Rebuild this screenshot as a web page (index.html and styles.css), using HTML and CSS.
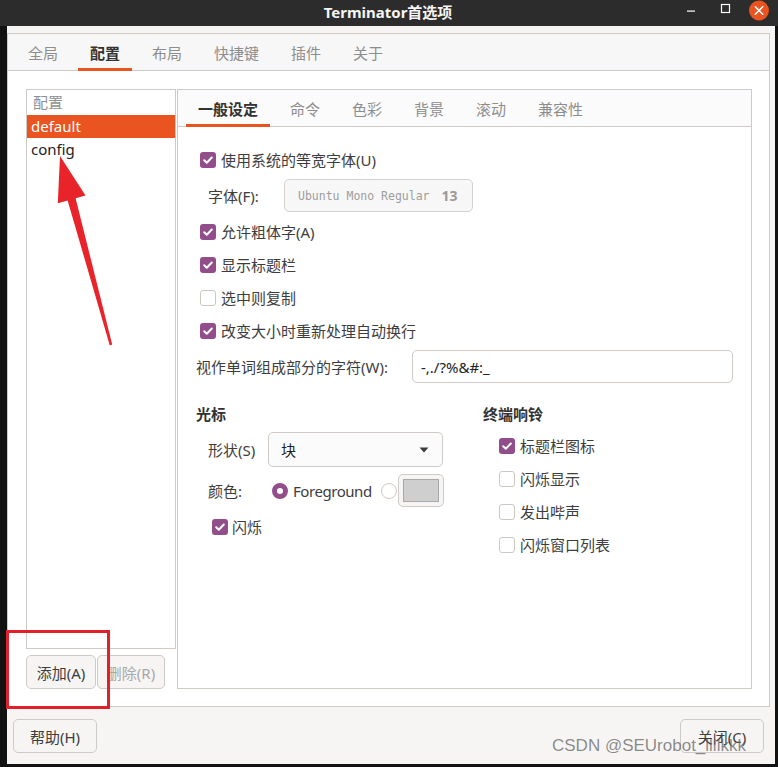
FILE: index.html
```html
<!DOCTYPE html>
<html lang="zh-CN">
<head>
<meta charset="utf-8">
<title>Terminator首选项</title>
<link rel="stylesheet" href="styles.css">
</head>
<body>
<div class="screen">
  <header class="titlebar">
    <div class="title">Terminator首选项</div>
    <div class="wm">
      <span class="wm-btn"><svg width="34" height="21" viewBox="0 0 34 21"><rect x="13" y="10.5" width="8" height="1.2" fill="#fff"/></svg></span>
      <span class="wm-btn"><svg width="34" height="21" viewBox="0 0 34 21"><rect x="13.5" y="4.5" width="8" height="8" fill="none" stroke="#fff" stroke-width="1.2"/></svg></span>
      <span class="wm-btn"><svg width="34" height="21" viewBox="0 0 34 21"><circle cx="17" cy="10.5" r="10" fill="#e95420"/><path d="M13.3 6.8l7.4 7.4M20.7 6.8l-7.4 7.4" stroke="#fff" stroke-width="1.6" stroke-linecap="round"/></svg></span>
    </div>
  </header>

  <div class="window">
    <div class="notebook outer">
      <div class="tabs">
        <div class="tab">全局</div>
        <div class="tab active">配置</div>
        <div class="tab">布局</div>
        <div class="tab">快捷键</div>
        <div class="tab">插件</div>
        <div class="tab">关于</div>
      </div>
      <div class="page profiles-page">
        <div class="profiles">
          <div class="list">
            <div class="list-head">配置</div>
            <div class="list-row selected">default</div>
            <div class="list-row">config</div>
          </div>
          <div class="list-buttons">
            <button class="btn btn-add">添加(A)</button>
            <button class="btn btn-del" disabled>删除(R)</button>
          </div>
        </div>

        <div class="notebook inner">
          <div class="tabs">
            <div class="tab active">一般设定</div>
            <div class="tab">命令</div>
            <div class="tab">色彩</div>
            <div class="tab">背景</div>
            <div class="tab">滚动</div>
            <div class="tab">兼容性</div>
          </div>
          <div class="settings">
            <div class="row cbrow"><span class="check on"><svg width="16" height="16" viewBox="0 0 16 16"><path d="M4.2 8.3l2.6 2.5 5-5.3" fill="none" stroke="#fff" stroke-width="2" stroke-linecap="round" stroke-linejoin="round"/></svg></span><span class="cb-label">使用系统的等宽字体(U)</span></div>
            <div class="row font-row"><span class="font-label">字体(F):</span><span class="fontbtn"><span class="mono">Ubuntu Mono Regular</span><span class="fsize">13</span></span></div>
            <div class="row cbrow gap3"><span class="check on"><svg width="16" height="16" viewBox="0 0 16 16"><path d="M4.2 8.3l2.6 2.5 5-5.3" fill="none" stroke="#fff" stroke-width="2" stroke-linecap="round" stroke-linejoin="round"/></svg></span><span class="cb-label">允许粗体字(A)</span></div>
            <div class="row cbrow"><span class="check on"><svg width="16" height="16" viewBox="0 0 16 16"><path d="M4.2 8.3l2.6 2.5 5-5.3" fill="none" stroke="#fff" stroke-width="2" stroke-linecap="round" stroke-linejoin="round"/></svg></span><span class="cb-label">显示标题栏</span></div>
            <div class="row cbrow"><span class="check"></span><span class="cb-label">选中则复制</span></div>
            <div class="row cbrow"><span class="check on"><svg width="16" height="16" viewBox="0 0 16 16"><path d="M4.2 8.3l2.6 2.5 5-5.3" fill="none" stroke="#fff" stroke-width="2" stroke-linecap="round" stroke-linejoin="round"/></svg></span><span class="cb-label">改变大小时重新处理自动换行</span></div>
            <div class="row word-row"><span class="word-label">视作单词组成部分的字符(W):</span><span class="entry">-,./?%&amp;#:_</span></div>

            <div class="columns">
              <div class="col">
                <div class="section-head">光标</div>
                <div class="row shape-row"><span class="field-label">形状(S)</span><span class="combo"><span>块</span><svg width="10" height="6" viewBox="0 0 10 6"><path d="M0.5 0.5h9L5 5.5z" fill="#3d3d3d"/></svg></span></div>
                <div class="row color-row"><span class="field-label">颜色:</span><span class="radio on"></span><span class="radio-label">Foreground</span><span class="radio"></span><span class="colorbtn"><span class="swatch"></span></span></div>
                <div class="row blink-row"><span class="check on"><svg width="16" height="16" viewBox="0 0 16 16"><path d="M4.2 8.3l2.6 2.5 5-5.3" fill="none" stroke="#fff" stroke-width="2" stroke-linecap="round" stroke-linejoin="round"/></svg></span><span class="cb-label tight">闪烁</span></div>
              </div>
              <div class="col">
                <div class="section-head">终端响铃</div>
                <div class="row bell-row first"><span class="check on"><svg width="16" height="16" viewBox="0 0 16 16"><path d="M4.2 8.3l2.6 2.5 5-5.3" fill="none" stroke="#fff" stroke-width="2" stroke-linecap="round" stroke-linejoin="round"/></svg></span><span class="cb-label">标题栏图标</span></div>
                <div class="row bell-row"><span class="check"></span><span class="cb-label">闪烁显示</span></div>
                <div class="row bell-row"><span class="check"></span><span class="cb-label">发出哔声</span></div>
                <div class="row bell-row"><span class="check"></span><span class="cb-label">闪烁窗口列表</span></div>
              </div>
            </div>
          </div>
        </div>
      </div>
    </div>

    <div class="dialog-buttons">
      <button class="btn btn-dialog">帮助(H)</button>
      <button class="btn btn-dialog">关闭(C)</button>
    </div>
  </div>

  <div class="annot-box"></div>
  <svg class="annot-arrow" width="778" height="767" viewBox="0 0 778 767">
    <polygon points="60,156 85.5,195.5 75.6,198.2 112.2,344.6 109.8,345.4 67.6,200.4 57.8,203.2" fill="#e8232a"/>
  </svg>
  <div class="watermark">CSDN @SEUrobot_llllkkk</div>
</div>
</body>
</html>
```

FILE: styles.css
```css
* { box-sizing: border-box; margin: 0; padding: 0; }

html, body { width: 778px; height: 767px; overflow: hidden; }

body {
  background: #121212;
  font-family: "Noto Sans", "Noto Sans CJK SC", sans-serif;
  font-size: 15px;
  color: #3d3d3d;
}

.screen {
  position: relative;
  width: 778px;
  height: 767px;
  display: flex;
  flex-direction: column;
}

/* title bar */
.titlebar {
  height: 26px;
  background: #2c2c2c;
  display: grid;
  grid-template-columns: 1fr auto 1fr;
  color: #f4f4f4;
  padding-right: 2px;
}
.title {
  grid-column: 2;
  font-weight: 700;
  font-size: 15px;
  line-height: 25px;
}
.wm {
  grid-column: 3;
  justify-self: end;
  display: flex;
}
.wm-btn { width: 34px; height: 21px; display: flex; }

/* window */
.window {
  margin-left: 7px;
  width: 768px;
  height: 738px;
  background: #f6f5f4;
  padding-top: 7px;
  display: flex;
  flex-direction: column;
}

.notebook {
  border: 1px solid #cfcac6;
  display: flex;
  flex-direction: column;
}
.notebook.outer {
  margin-right: 5px;
  height: 674px;
}
.tabs {
  height: 37px;
  border-bottom: 1px solid #cfcac6;
  background: #f7f7f7;
  display: flex;
  padding-left: 4px;
  flex-shrink: 0;
}
.tab {
  height: 37px;
  margin: 0 4px -1px;
  padding: 0 12px;
  display: flex;
  align-items: center;
  color: #8d8d8d;
  font-size: 15px;
  border-bottom: 3px solid transparent;
  padding-top: 3px;
}
.tab.active {
  color: #333;
  font-weight: 700;
  border-bottom-color: #e95420;
}

.page {
  flex: 1;
  background: #fff;
  padding: 18px 17px 17px 18px;
  display: flex;
  gap: 1px;
}

/* profiles list */
.profiles {
  width: 150px;
  display: flex;
  flex-direction: column;
  gap: 6px;
}
.list {
  flex: 1;
  border: 1px solid #cfcac6;
  background: #fff;
}
.list-head {
  height: 25px;
  line-height: 25px;
  padding-left: 6px;
  color: #8e9193;
}
.list-row {
  height: 23px;
  line-height: 23px;
  padding-left: 4px;
  color: #222;
}
.list-row.selected {
  background: #e95420;
  color: #fff;
}
.list-buttons {
  display: flex;
  gap: 1px;
  height: 34px;
}

.btn {
  font-family: "Noto Sans", "Noto Sans CJK SC", sans-serif;
  font-size: 15px;
  color: #3d3d3d;
  background: #f6f5f4;
  border: 1px solid #cfcac6;
  border-radius: 5px;
  height: 34px;
}
.btn-add { width: 70px; }
.btn-del { width: 68px; color: #a8a8a8; }

/* inner notebook */
.notebook.inner {
  flex: 1;
  height: 600px;
}
.notebook.inner .tabs { background: #fbfbfb; }

.settings {
  flex: 1;
  background: #fff;
  padding: 16px 0 0 18px;
  display: flex;
  flex-direction: column;
}

.row {
  display: flex;
  align-items: center;
  height: 33px;
  flex-shrink: 0;
  white-space: nowrap;
}
.cbrow { padding-left: 4px; }
.gap3 { margin-top: 3px; }

.check {
  width: 16px;
  height: 16px;
  border-radius: 3px;
  border: 1px solid #cdc7c2;
  background: #fff;
  flex-shrink: 0;
  display: flex;
}
.check.on {
  background: #924d8b;
  border: none;
}
.cb-label { margin-left: 5px; color: #3d3d3d; }
.cb-label.tight { margin-left: 4px; }

.font-row { margin-top: 3px; padding-left: 12px; }
.font-label { width: 76px; flex-shrink: 0; }
.fontbtn {
  width: 189px;
  height: 33px;
  flex-shrink: 0;
  border: 1px solid #d6d1cd;
  border-radius: 5px;
  background: #f7f7f7;
  display: flex;
  align-items: center;
  padding: 0 10px 0 13px;
  gap: 12px;
  white-space: nowrap;
}
.mono {
  font-family: "DejaVu Sans Mono", "Liberation Mono", monospace;
  font-size: 11.5px;
  color: #9d9d9d;
  flex-shrink: 0;
}
.fsize { font-weight: 700; color: #9a9a9a; font-size: 14px; flex-shrink: 0; }

.word-row { margin-top: 3px; }
.word-label { width: 216px; flex-shrink: 0; }
.entry {
  width: 321px;
  height: 33px;
  border: 1px solid #cfcac6;
  border-radius: 5px;
  background: #fff;
  display: flex;
  align-items: center;
  padding-left: 8px;
  color: #222;
}

.columns {
  margin-top: 20px;
  display: grid;
  grid-template-columns: 287px 1fr;
}
.col { display: flex; flex-direction: column; }
.section-head {
  height: 22px;
  line-height: 22px;
  font-weight: 700;
  color: #333;
}
.field-label { width: 60px; flex-shrink: 0; }
.shape-row, .color-row { padding-left: 12px; margin-top: 7px; }
.shape-row { height: 35px; }
.combo {
  width: 175px;
  height: 35px;
  border: 1px solid #cfcac6;
  border-radius: 5px;
  background: #fbfbfb;
  display: flex;
  align-items: center;
  justify-content: space-between;
  padding: 0 13px 0 12px;
  color: #222;
}

.radio {
  width: 16px;
  height: 16px;
  border-radius: 50%;
  border: 1px solid #cdc7c2;
  background: #fff;
  flex-shrink: 0;
}
.radio.on {
  margin-left: 4px;
  border: 5px solid #924d8b;
  background: #fff;
}
.radio-label {
  margin-left: 5px;
  width: 88px;
  flex-shrink: 0;
  letter-spacing: -0.45px;
  color: #3d3d3d;
}
.colorbtn {
  margin-left: 1px;
  width: 46px;
  height: 33px;
  flex-shrink: 0;
  border: 1px solid #cfcac6;
  border-radius: 5px;
  background: #f6f5f4;
  display: flex;
  align-items: center;
  justify-content: center;
}
.swatch {
  width: 36px;
  height: 23px;
  background: #cfcfcf;
  border: 1px solid #a9a9a9;
}

.blink-row { margin-top: 3px; padding-left: 16px; }

.bell-row { padding-left: 16px; }
.bell-row.first { margin-top: 4px; }

/* dialog buttons */
.dialog-buttons {
  display: flex;
  justify-content: space-between;
  padding: 12px 11px 0 6px;
}
.btn-dialog { width: 84px; height: 34px; }

/* annotations over the screenshot */
.annot-box {
  position: absolute;
  left: 6px;
  top: 630px;
  width: 104px;
  height: 79px;
  border: 3px solid #e3202a;
}
.annot-arrow {
  position: absolute;
  left: 0;
  top: 0;
  pointer-events: none;
}
.watermark {
  position: absolute;
  left: 552px;
  top: 736px;
  font-family: "Liberation Sans", Arial, sans-serif;
  font-size: 17px;
  color: rgba(95, 95, 95, 0.72);
  white-space: nowrap;
}
```
